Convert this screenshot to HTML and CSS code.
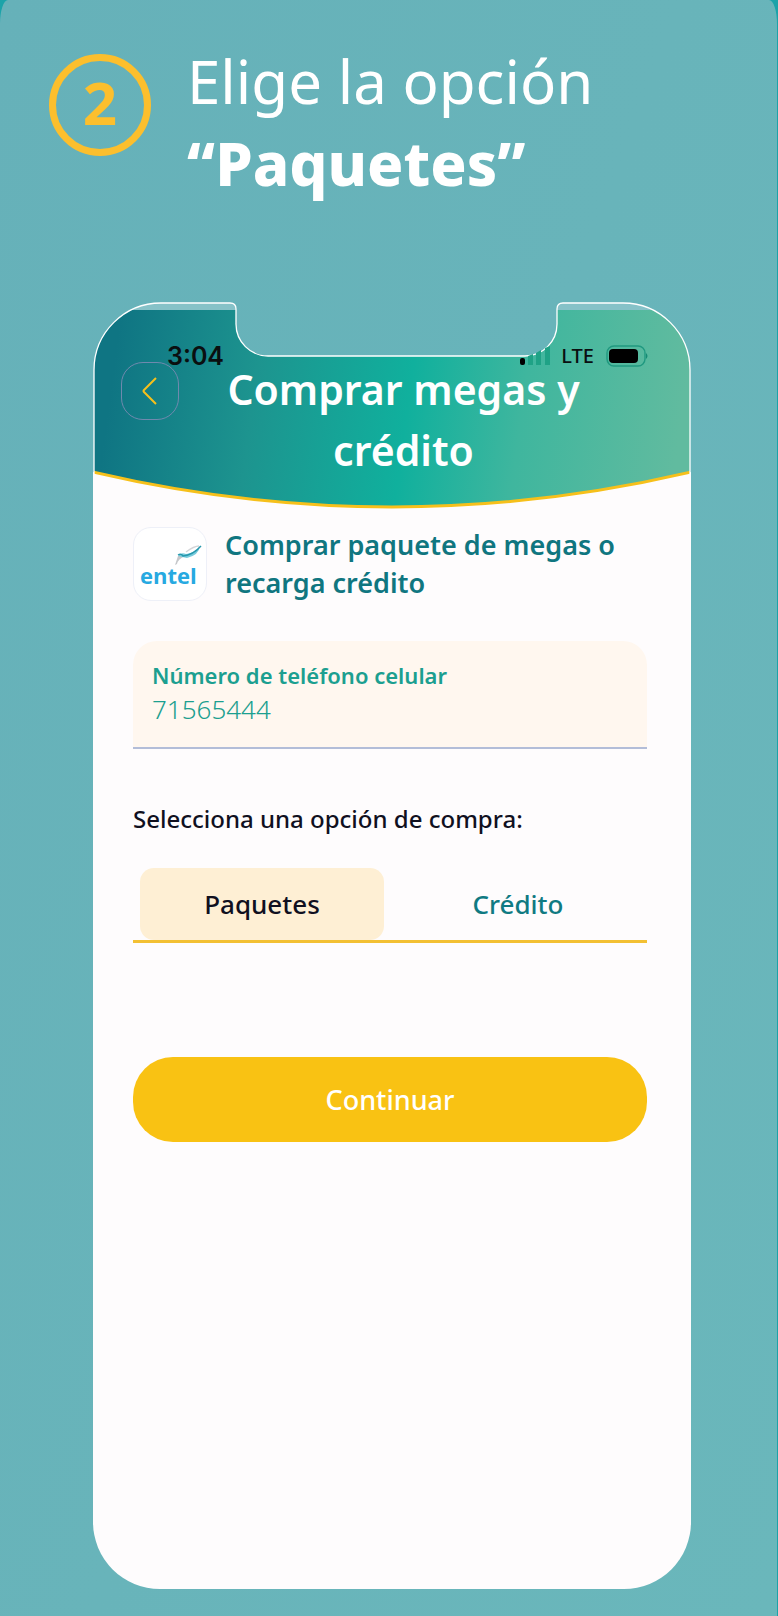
FILE: index.html
```html
<!DOCTYPE html>
<html lang="es">
<head>
<meta charset="utf-8">
<meta name="viewport" content="width=device-width, initial-scale=1">
<title>Elige la opción “Paquetes”</title>
<link rel="stylesheet" href="styles.css">
</head>
<body>
<main class="card">
  <header class="step">
    <span class="step-number">2</span>
    <h1 class="step-title">Elige la opción <strong>“Paquetes”</strong></h1>
  </header>

  <section class="phone">
    <div class="hero">
      <svg class="hero-art" viewBox="0 0 598 207" preserveAspectRatio="none" aria-hidden="true">
        <defs>
          <linearGradient id="teal" gradientUnits="userSpaceOnUse" x1="20" y1="70" x2="585" y2="145">
            <stop offset="0" stop-color="#0f7583"/>
            <stop offset=".25" stop-color="#1d948f"/>
            <stop offset=".52" stop-color="#10b09d"/>
            <stop offset=".72" stop-color="#3fb69e"/>
            <stop offset="1" stop-color="#61bb9f"/>
          </linearGradient>
          <clipPath id="screen">
            <path d="M1 207V68A67 67 0 0 1 68 1H137Q143 1 143 7V22A32 32 0 0 0 175 54H432A32 32 0 0 0 464 22V7Q464 1 470 1H530A67 67 0 0 1 597 68V207Z"/>
          </clipPath>
        </defs>
        <path d="M0 170Q299 240 598 170V207H0Z" fill="#fefcfd"/>
        <g clip-path="url(#screen)">
          <path d="M0 0H598V9H0Z" fill="#86c2c8"/>
          <path d="M0 8H598V170Q299 240 0 170Z" fill="url(#teal)"/>
          <path d="M0 170Q299 240 598 170" fill="none" stroke="#f6c01b" stroke-width="3"/>
        </g>
        <path d="M1 172V68A67 67 0 0 1 68 1H137Q143 1 143 7V22A32 32 0 0 0 175 54H432A32 32 0 0 0 464 22V7Q464 1 470 1H530A67 67 0 0 1 597 68V172" fill="none" stroke="#fff" stroke-width="1.3"/>
      </svg>
      <div class="status">
        <span class="clock">3:04</span>
        <svg class="signal" viewBox="0 0 32 20" aria-hidden="true">
          <rect x="1" y="12" width="5" height="7" rx="2" fill="#000"/>
          <path d="M9 10L14 8V19H9ZM17 7L22 4V19H17ZM26 2L31 0V19H26Z" fill="#1fa286"/>
        </svg>
        <span class="network">LTE</span>
        <svg class="battery" viewBox="0 0 43 22" aria-hidden="true">
          <rect x="1" y="1" width="38" height="20" rx="7" fill="none" stroke="#209980" stroke-width="1.4"/>
          <rect x="3" y="4" width="29" height="14" rx="4" fill="#000"/>
          <path d="M40 8Q43 11 40 14Z" fill="#158a74"/>
        </svg>
      </div>
      <div class="hero-bar">
        <button class="back" type="button" aria-label="Volver">
          <svg viewBox="0 0 16 28" aria-hidden="true"><path d="M14 1L2 13Q1 14 2 15L14 27" fill="none" stroke="#f6c01b" stroke-width="2"/></svg>
        </button>
        <h2 class="hero-title">Comprar megas y crédito</h2>
      </div>
    </div>

    <form class="content">
      <div class="product">
        <div class="logo">
          <svg viewBox="0 0 72 72" role="img" aria-label="entel">
            <path d="M41 37L44 28L51 28Q44 31 43 36Z" fill="#c5c7ca"/>
            <path d="M44 28Q47 24 52 26Q61 25 66 18Q65 27 53 30Q48 29 44 28Z" fill="#79cbdc"/>
            <path d="M44 27Q47 25 49 28Q59 27 67 18" fill="none" stroke="#2798ad" stroke-width="1.4"/>
            <path d="M52 24Q60 18 65 18" fill="none" stroke="#d4d5d8" stroke-width="1.5"/>
            <text class="logo-text" x="6" y="56">entel</text>
          </svg>
        </div>
        <h3 class="product-title">Comprar paquete de megas o recarga crédito</h3>
      </div>

      <div class="field">
        <label class="field-label" for="phone">Número de teléfono celular</label>
        <input class="field-input" id="phone" type="tel" value="71565444">
      </div>

      <p class="prompt" id="prompt">Selecciona una opción de compra:</p>
      <div class="tabs" role="tablist" aria-labelledby="prompt">
        <button class="tab tab-active" type="button" role="tab" aria-selected="true">Paquetes</button>
        <button class="tab" type="button" role="tab" aria-selected="false">Crédito</button>
      </div>

      <button class="submit" type="button">Continuar</button>
    </form>
  </section>
</main>
</body>
</html>
```
FILE: styles.css
```css
* {
  box-sizing: border-box;
}

body {
  margin: 0;
  background: #1ba3a9;
  font-family: "Noto Sans", sans-serif;
}

h1, h2, h3, p {
  margin: 0;
}

button, input {
  font: inherit;
  border: 0;
  background: none;
  padding: 0;
}

.card {
  display: flex;
  flex-direction: column;
  min-height: 100vh;
  margin-right: 1px;
  padding: 40px 86px 27px 93px;
  border-radius: 8px / 24px;
  border-bottom-left-radius: 0;
  border-bottom-right-radius: 0;
  background: linear-gradient(110deg, #66b1b9, #6ab7bb);
}

.step {
  display: flex;
  gap: 36px;
  margin: 0 -44px 0 -44px;
  padding-bottom: 98px;
}

.step-number {
  display: flex;
  flex: none;
  align-items: center;
  justify-content: center;
  width: 102px;
  height: 102px;
  margin-top: 14px;
  padding-bottom: 6px;
  border: 7px solid #fcbf2d;
  border-radius: 50%;
  color: #fcbf2d;
  font-size: 60px;
  font-weight: 700;
  line-height: 80px;
}

.step-title {
  color: #fff;
  font-size: 60px;
  font-weight: 400;
  line-height: 82px;
}

.step-title strong {
  display: block;
  font-weight: 800;
}

.phone {
  display: flex;
  flex: 1;
  flex-direction: column;
}

.hero {
  position: relative;
  height: 207px;
  padding-top: 57px;
}

.hero-art {
  position: absolute;
  inset: 0;
  width: 100%;
  height: 100%;
}

.status {
  position: absolute;
  top: 43px;
  left: 74px;
  right: 42px;
  display: flex;
  align-items: center;
  height: 22px;
  color: #0a0f10;
  line-height: 22px;
}

.clock {
  flex: 1;
  font-family: Inter, sans-serif;
  font-size: 25px;
  font-weight: 600;
}

.signal {
  width: 32px;
  height: 20px;
}

.network {
  margin: 0 12px 0 10px;
  font-size: 20px;
  font-weight: 500;
}

.battery {
  width: 43px;
  height: 22px;
}

.hero-bar {
  position: relative;
  display: flex;
  align-items: flex-start;
  padding: 0 63px 0 28px;
}

.back {
  display: flex;
  flex: none;
  align-items: center;
  justify-content: center;
  width: 58px;
  height: 58px;
  margin-top: 3px;
  border: 1px solid #6f89ae;
  border-radius: 22px;
}

.back svg {
  width: 16px;
  height: 28px;
}

.hero-title {
  flex: 1;
  padding: 0 40px;
  color: #fff;
  font-size: 41px;
  font-weight: 600;
  line-height: 61px;
  text-align: center;
}

.content {
  display: flex;
  flex: 1;
  flex-direction: column;
  padding: 17px 44px 80px 40px;
  border-radius: 0 0 67px 67px;
  background: #fefcfd;
}

.product {
  display: flex;
  align-items: center;
  gap: 18px;
}

.logo {
  flex: none;
  width: 74px;
  height: 74px;
  border: 1px solid #eef0f8;
  border-radius: 18px;
  background: #fff;
}

.logo-text {
  fill: #27a9e1;
  font-family: "Open Sans", sans-serif;
  font-size: 22px;
  font-weight: 700;
}

.product-title {
  color: #107680;
  font-size: 27px;
  font-weight: 600;
  line-height: 38px;
}

.field {
  display: flex;
  flex-direction: column;
  margin-top: 39px;
  padding: 19px 19px 19px;
  border-bottom: 2px solid #b3bdd8;
  border-radius: 24px 24px 0 0;
  background: #fff7ef;
}

.field-label {
  color: #1c9f90;
  font-size: 22px;
  font-weight: 600;
  line-height: 30px;
}

.field-input {
  width: 100%;
  height: 38px;
  color: #1c9f90;
  font-size: 26px;
  font-weight: 300;
}

.prompt {
  margin-top: 53px;
  color: #10101f;
  font-size: 24px;
  font-weight: 500;
  line-height: 34px;
}

.tabs {
  display: flex;
  gap: 12px;
  margin-top: 32px;
  padding: 0 7px;
  border-bottom: 3px solid #f3c033;
}

.tab {
  flex: 1;
  height: 72px;
  border-radius: 14px;
  color: #107a82;
  font-size: 26px;
  font-weight: 500;
}

.tab-active {
  background: #feefd4;
  color: #10101f;
}

.submit {
  height: 85px;
  margin-top: 114px;
  border-radius: 40px;
  background: #f9c213;
  color: #fff;
  font-size: 27px;
  font-weight: 500;
}
```
